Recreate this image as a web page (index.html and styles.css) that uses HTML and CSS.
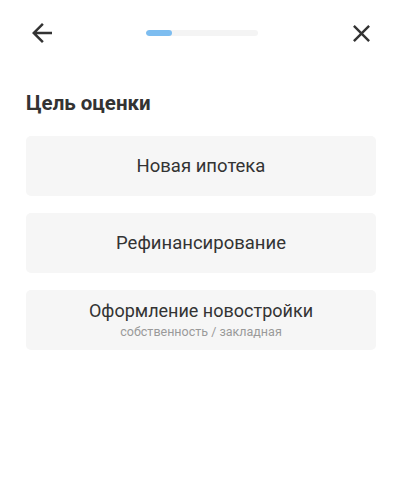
FILE: index.html
```html
<!DOCTYPE html>
<html lang="ru">
<head>
<meta charset="utf-8">
<title>Цель оценки</title>
<link rel="stylesheet" href="styles.css">
</head>
<body>
<header class="topbar">
  <button class="icon-btn" aria-label="Назад">
    <svg viewBox="0 0 24 24" width="30" height="30"><path fill="#333" d="M20 11H7.83l5.59-5.59L12 4l-8 8 8 8 1.41-1.41L7.83 13H20v-2z"/></svg>
  </button>
  <div class="progress"><div class="progress-fill" style="width:24%"></div></div>
  <button class="icon-btn" aria-label="Закрыть">
    <svg viewBox="0 0 24 24" width="29" height="29"><path fill="#333" d="M19 6.41L17.59 5 12 10.59 6.41 5 5 6.41 10.59 12 5 17.59 6.41 19 12 13.41 17.59 19 19 17.59 13.41 12z"/></svg>
  </button>
</header>
<main class="content">
  <h1 class="title">Цель оценки</h1>
  <div class="options">
    <div class="option"><span class="option-main">Новая ипотека</span></div>
    <div class="option"><span class="option-main">Рефинансирование</span></div>
    <div class="option option-with-sub"><span class="option-main">Оформление новостройки</span><span class="option-sub">собственность / закладная</span></div>
  </div>
</main>
</body>
</html>
```
FILE: styles.css
```css
html, body {
  margin: 0;
  padding: 0;
  background: #fff;
}
body {
  font-family: Roboto, "Noto Sans", sans-serif;
  color: #333;
}
.topbar {
  display: flex;
  align-items: center;
  justify-content: space-between;
  height: 66px;
  padding: 0 26px 0 27px;
}
.icon-btn {
  border: 0;
  background: none;
  padding: 0;
  width: 30px;
  height: 30px;
  display: flex;
  align-items: center;
  justify-content: center;
}
.progress {
  width: 112px;
  height: 6px;
  border-radius: 3px;
  background: #f4f4f4;
  overflow: hidden;
}
.progress-fill {
  height: 100%;
  border-radius: 3px;
  background: #7dbdf0;
}
.content {
  padding: 0 26px;
}
.title {
  margin: 25px 0 21px;
  font-size: 20.5px;
  line-height: 24px;
  font-weight: 700;
  color: #333;
}
.options {
  display: flex;
  flex-direction: column;
  gap: 17px;
}
.option {
  height: 60px;
  border-radius: 5px;
  background: #f6f6f6;
  display: flex;
  flex-direction: column;
  align-items: center;
  justify-content: center;
}
.option-main {
  font-size: 18.5px;
  line-height: 22px;
  color: #333;
}
.option-with-sub .option-main {
  font-size: 18px;
}
.option-sub {
  margin-top: 2px;
  font-size: 12.5px;
  line-height: 16px;
  color: #9a9a9a;
}
```
